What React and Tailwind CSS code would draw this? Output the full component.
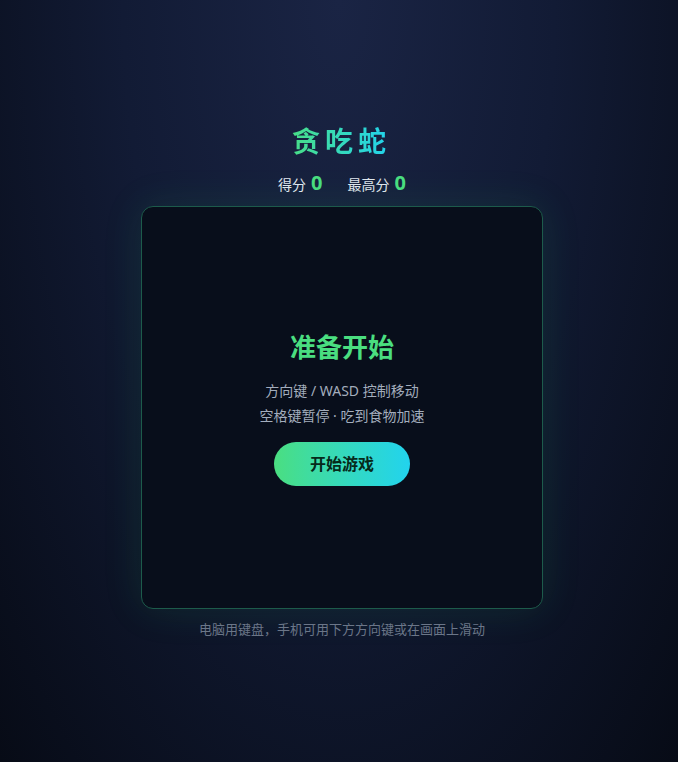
import React from "react";

export default function App() {
  const font = { fontFamily: '"Noto Sans", "Noto Sans CJK SC", sans-serif' };
  return (
    <div
      className="min-h-[762px] w-full flex flex-col items-center bg-[radial-gradient(ellipse_at_top,#1a2444_0%,#121b35_45%,#070b16_100%)]"
      style={font}
    >
      <h1 className="mt-[121px] text-[28px] leading-[40px] font-bold tracking-[5px] pl-[5px] bg-gradient-to-r from-[#4ade80] to-[#22d3ee] bg-clip-text text-transparent">
        贪吃蛇
      </h1>
      <div className="mt-[10px] ml-[6px] flex items-center gap-[25px] text-[14px] text-[#e2e8f0] leading-[24px]">
        <div className="flex items-baseline gap-[5px]">
          <span>得分</span>
          <span className="text-[20px] font-bold text-[#4ade80]">0</span>
        </div>
        <div className="flex items-baseline gap-[5px]">
          <span>最高分</span>
          <span className="text-[20px] font-bold text-[#4ade80]">0</span>
        </div>
      </div>
      <div className="mt-[9px] ml-[6px] w-[402px] h-[403px] rounded-[12px] border border-[#1d5b4b] bg-[#080e1b] shadow-[0_0_40px_rgba(34,197,94,0.12)] flex flex-col items-center justify-center">
        <div className="text-[26px] leading-[36px] font-bold text-[#4ade80]">准备开始</div>
        <div className="mt-[13px] text-[14px] leading-[25px] text-[#a3adbd] text-center">
          <div>方向键 / WASD 控制移动</div>
          <div>空格键暂停 · 吃到食物加速</div>
        </div>
        <button className="mt-[14px] w-[136px] h-[44px] rounded-full bg-gradient-to-r from-[#4ade80] to-[#22d3ee] text-[16px] font-bold text-[#062a1a]">
          开始游戏
        </button>
      </div>
      <div className="mt-[10px] ml-[6px] text-[13px] leading-[20px] text-[#6b7688]">
        电脑用键盘，手机可用下方方向键或在画面上滑动
      </div>
    </div>
  );
}
